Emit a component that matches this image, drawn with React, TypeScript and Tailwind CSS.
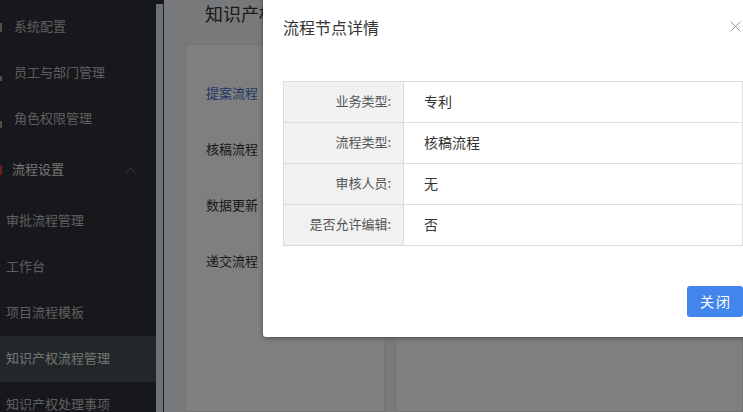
const menuTop = [
  { label: "系统配置", bar: "h-[9px]", offset: "" },
  { label: "员工与部门管理", bar: "h-[5px]", offset: "mt-[10px]" },
  { label: "角色权限管理", bar: "h-[7px]", offset: "mt-[10px]" },
];

const subMenu = ["审批流程管理", "工作台", "项目流程模板", "知识产权流程管理", "知识产权处理事项"];
const flows = ["提案流程", "核稿流程", "数据更新", "递交流程"];
const details = [
  { label: "业务类型:", value: "专利" },
  { label: "流程类型:", value: "核稿流程" },
  { label: "审核人员:", value: "无" },
  { label: "是否允许编辑:", value: "否" },
];

export default function App() {
  return (
    <div className="relative flex h-[412px] w-[743px] overflow-hidden bg-[#f0f2f5] font-['Noto_Sans_CJK_SC',sans-serif]">
      <aside className="flex h-full w-[156px] shrink-0 flex-col overflow-hidden bg-[#2f3138] pt-1 text-[13px] text-[#bcbcbc]">
        {menuTop.map((item) => (
          <div key={item.label} className="flex h-[46px] shrink-0 items-center">
            <span className={`w-[2px] bg-[#a89c90] ${item.bar} ${item.offset}`} />
            <span className="mb-[2px] ml-[12px]">{item.label}</span>
          </div>
        ))}
        <div className="flex h-[56px] shrink-0 items-center">
          <span className="h-[10px] w-[2px] bg-[#d93636]" />
          <span className="mb-[2px] ml-[10px] text-[#e6e6e6]">流程设置</span>
          <svg className="ml-[61px]" width="11" height="6" viewBox="0 0 11 6" fill="none" stroke="#777" strokeWidth="1">
            <path d="M1 5.5 5.5 1 10 5.5" />
          </svg>
        </div>
        {subMenu.map((label) => (
          <div
            key={label}
            className={`flex h-[46px] shrink-0 items-center pb-[2px] pl-[6px] ${
              label === "知识产权流程管理" ? "bg-[#444e52] text-[#e6e6e6]" : ""
            }`}
          >
            {label}
          </div>
        ))}
      </aside>

      <div className="h-full w-[7px] shrink-0 bg-[#2f3138] pt-1">
        <div className="h-full bg-[#d9e2ea]" />
      </div>
      <div className="h-full w-px shrink-0 bg-[#36393e]" />

      <main className="flex min-w-0 flex-1 flex-col pl-[21px]">
        <h1 className="h-[44px] whitespace-nowrap pl-[20px] text-[18px] leading-[26px] text-[#333]">知识产权流程管理</h1>
        <div className="flex flex-1 gap-[10px]">
          <section className="flex w-[200px] shrink-0 flex-col border border-[#e8e8e8] bg-white pl-[20px] pt-[20px] text-[13px] text-[#333]">
            {flows.map((flow, i) => (
              <div key={flow} className={`flex h-[56px] items-center ${i === 0 ? "text-[#3f6fd0]" : ""}`}>
                {flow}
              </div>
            ))}
          </section>
          <section className="flex-1 border border-[#e8e8e8] bg-white" />
        </div>
      </main>

      <div className="absolute inset-0 bg-black/50" />

      <div className="absolute left-[263px] top-[-20px] h-[357px] w-[520px] rounded-[3px] bg-white shadow-[0_1px_4px_rgba(0,0,0,0.4)]">
        <h2 className="h-[77px] pl-[20px] pt-[35px] text-base leading-6 text-[#333]">流程节点详情</h2>
        <svg className="absolute left-[467px] top-[41px]" width="11" height="11" viewBox="0 0 11 11" stroke="#999" strokeWidth="1">
          <path d="M.5.5l10 10M10.5.5l-10 10" />
        </svg>
        <div className="ml-[20px] mt-[24px] w-[460px] border border-[#dcdcdc] text-sm text-[#333]">
          {details.map((row, i) => (
            <div key={row.label} className={`flex ${i > 0 ? "h-[41px] border-t border-[#dcdcdc]" : "h-[40px]"}`}>
              <div className="flex w-[120px] items-center justify-end border-r border-[#dcdcdc] bg-[#f1f1f1] pb-[2px] pr-[12px] text-[13px] text-[#555]">
                {row.label}
              </div>
              <div className="flex items-center pb-[2px] pl-[20px]">{row.value}</div>
            </div>
          ))}
        </div>
        <div className="mt-[40px] flex w-[480px] justify-end">
          <button className="h-[31px] w-[56px] rounded-[3px] bg-[#4285ec] pb-[2px] pl-[2px] text-sm tracking-[2px] text-white">关闭</button>
        </div>
      </div>
    </div>
  );
}
